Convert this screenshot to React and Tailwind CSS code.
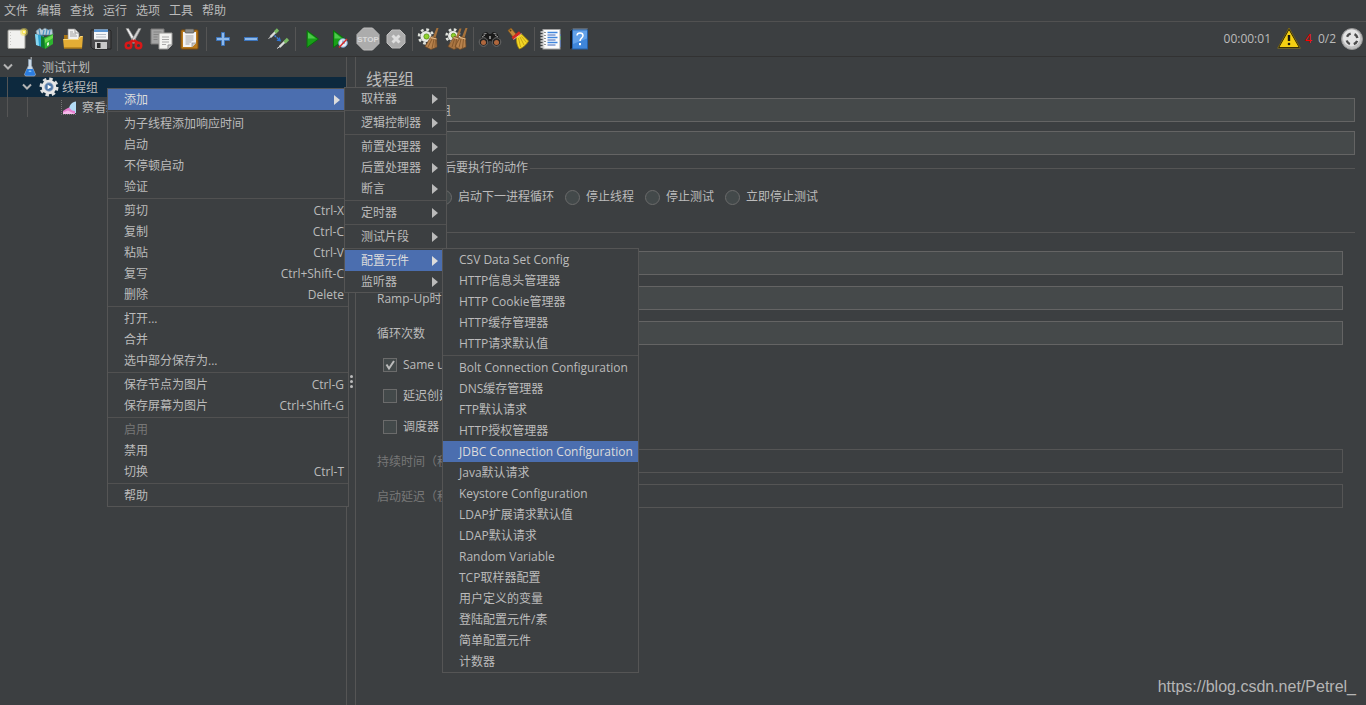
import { useState } from 'react'

const menuBar = ['文件', '编辑', '查找', '运行', '选项', '工具', '帮助']

// Each inner array is a block of items, blocks are split by a separator line
const configItems = [
    ['CSV Data Set Config', 'HTTP信息头管理器', 'HTTP Cookie管理器', 'HTTP缓存管理器', 'HTTP请求默认值'],
    [
        'Bolt Connection Configuration', 'DNS缓存管理器', 'FTP默认请求', 'HTTP授权管理器',
        'JDBC Connection Configuration', 'Java默认请求', 'Keystore Configuration', 'LDAP扩展请求默认值',
        'LDAP默认请求', 'Random Variable', 'TCP取样器配置', '用户定义的变量', '登陆配置元件/素',
        '简单配置元件', '计数器',
    ],
]

const addItems = [
    ['取样器'],
    ['逻辑控制器'],
    ['前置处理器', '后置处理器', '断言'],
    ['定时器'],
    ['测试片段'],
    ['配置元件', '监听器'],
]

const contextItems = [
    [{ label: '添加', arrow: true }],
    [{ label: '为子线程添加响应时间' }, { label: '启动' }, { label: '不停顿启动' }, { label: '验证' }],
    [
        { label: '剪切', keys: 'Ctrl-X' },
        { label: '复制', keys: 'Ctrl-C' },
        { label: '粘贴', keys: 'Ctrl-V' },
        { label: '复写', keys: 'Ctrl+Shift-C' },
        { label: '删除', keys: 'Delete' },
    ],
    [{ label: '打开...' }, { label: '合并' }, { label: '选中部分保存为...' }],
    [{ label: '保存节点为图片', keys: 'Ctrl-G' }, { label: '保存屏幕为图片', keys: 'Ctrl+Shift-G' }],
    [{ label: '启用', disabled: true }, { label: '禁用' }, { label: '切换', keys: 'Ctrl-T' }],
    [{ label: '帮助' }],
]

const Svg = ({ children, className = 'w-6 h-6' }) => (
    <svg className={className} viewBox="0 0 24 24" fill="none" aria-hidden="true">{children}</svg>
)

/* ---------- Toolbar icons ---------- */

const NewIcon = () => (
    <Svg>
        <rect x="3" y="3" width="17" height="18.5" rx="1" fill="#f1f1ef" stroke="#9d9d98" />
        <path d="M5.5 5v14.5" stroke="#c9c9c6" strokeDasharray="1 2" />
        <circle cx="19" cy="5" r="4" fill="#f2dd55" opacity=".45" />
        <circle cx="19" cy="5" r="2.4" fill="#f6e45c" />
        <circle cx="19" cy="5" r="1" fill="#fffde0" />
    </Svg>
)

const TemplatesIcon = () => (
    <Svg>
        <path d="M3 4l4-3 2 2 3-2 3 2 4-1 1 6H4z" fill="#b9cdd9" stroke="#71848f" strokeWidth=".7" />
        <path d="M6 2l1 6M11 3l-1 5M14 2l-1 6M17 3l-1 5" stroke="#4d93c2" strokeWidth="1.2" />
        <path d="M2 7l9 2v12l-7-3z" fill="#2ba0cf" />
        <path d="M2 7l3 1 1 11-3-1z" fill="#86d6f1" />
        <path d="M8 9l4 1v12l-4-2z" fill="#0f7a2b" />
        <path d="M11 11l9-4v10l-8 5z" fill="#2db32f" />
        <path d="M12 12l8-4v3l-8 5z" fill="#6bdc4f" />
        <path d="M14 16l2-1v3l-2 1z" fill="#d9f6cd" />
    </Svg>
)

const OpenIcon = () => (
    <Svg>
        <path d="M3 8h5l1 2h11v11H3z" fill="#a87414" />
        <path d="M7 2h7l4 4v9H7z" fill="#f2f2f2" stroke="#8e8e8e" strokeWidth=".7" />
        <path d="M14 2v4h4" stroke="#8e8e8e" strokeWidth=".8" />
        <path d="M9 5h3M9 7h6M9 9h7" stroke="#a2a2a2" />
        <path d="M2 12h15l2-3h3l-1 12.500H3z" fill="#e3ad35" />
        <path d="M2.500 12.500h15l2-3h2" stroke="#f8d983" />
        <path d="M3 21h18" stroke="#96650d" />
    </Svg>
)

const SaveIcon = () => (
    <Svg>
        <path d="M2 3h19l1 1v18H4l-2-2z" fill="#4a4a4c" stroke="#242424" />
        <rect x="5" y="2.500" width="14" height="10" fill="#f5f7f9" />
        <rect x="5" y="2.500" width="14" height="2.500" fill="#5c96d2" />
        <path d="M7 7.500h10M7 10h10" stroke="#b4bcc5" />
        <rect x="6" y="15" width="12" height="7" fill="#c9c9c9" />
        <rect x="8" y="16" width="3.500" height="5" fill="#2b2b2b" />
    </Svg>
)

const CutIcon = () => (
    <Svg>
        <path d="M4 1.500h2.500L14 14l-2 2.500z" fill="#f0f0f0" stroke="#8c8c8c" strokeWidth=".7" />
        <path d="M19 1.500h-2.500L9 14l2 2.500z" fill="#cfcfcf" stroke="#8c8c8c" strokeWidth=".7" />
        <path d="M11.500 13.500l-4 2M11.500 13.500l4 2" stroke="#d41616" strokeWidth="2.800" />
        <ellipse cx="6.500" cy="18.500" rx="2.800" ry="2.800" stroke="#d81818" strokeWidth="2.400" />
        <ellipse cx="16.500" cy="18.500" rx="2.800" ry="2.800" stroke="#d81818" strokeWidth="2.400" />
    </Svg>
)

const CopyIcon = () => (
    <Svg>
        <path d="M1 2h13v15H1z" fill="#a4a4a4" stroke="#787878" />
        <path d="M3.500 5h8M3.500 7.500h6M3.500 10h4M3.500 12.500h4" stroke="#858585" />
        <path d="M9 6h13v12l-4 4H9z" fill="#f3f3f1" stroke="#9a9a98" />
        <path d="M12 10h7M12 12.500h7M12 15h7M12 17.500h4" stroke="#a9a9a9" />
        <path d="M22 18h-4v4" fill="#d2d2d2" stroke="#8e8e8e" />
    </Svg>
)

const PasteIcon = () => (
    <Svg>
        <rect x="3" y="3" width="17" height="19" rx="1" fill="#b97a1c" stroke="#7e4d0b" />
        <path d="M5 5h13v11l-4 4H5z" fill="#f4f4f4" />
        <rect x="7" y="2" width="9" height="4" rx="1" fill="#8b8b87" stroke="#50504d" strokeWidth=".7" />
        <path d="M7.500 9h8M7.500 11h8M7.500 13h8M7.500 15h6M7.500 17h4" stroke="#a5a5a5" />
        <path d="M18 16h-4v4" fill="#c9c9c9" stroke="#8b8b8b" strokeWidth=".7" />
    </Svg>
)

const PlusIcon = () => (
    <Svg>
        <path d="M10.500 5.500h3v5h5v3h-5v5h-3v-5h-5v-3h5z" fill="#8cb8ea" stroke="#3c74bb" />
    </Svg>
)

const MinusIcon = () => (
    <Svg>
        <rect x="5.500" y="10.500" width="13" height="3" fill="#8cb8ea" stroke="#3c74bb" />
    </Svg>
)

const ToggleIcon = () => (
    <Svg>
        <path d="M1.500 11.500l3-2" stroke="#d6d6d6" />
        <path d="M3.500 10L9 4.500" stroke="#d9dcd7" strokeWidth="2.400" />
        <path d="M8 5.500l3-3" stroke="#78b862" strokeWidth="3.200" />
        <path d="M10 21.500l3-2" stroke="#d6d6d6" />
        <path d="M12.500 20l5.500-5.500" stroke="#d9dcd7" strokeWidth="2.400" />
        <path d="M17.500 15.500l3.500-3.500" stroke="#78b862" strokeWidth="3.200" />
        <path d="M7.500 8.500l4 3.500" stroke="#3c82dc" strokeWidth="1.500" strokeDasharray="2 1" />
        <path d="M14 14.500l-4.500-.800 3.300-3.700z" fill="#2f76d8" />
    </Svg>
)

const StartIcon = () => (
    <Svg>
        <path d="M7 3.500L18.500 12 7 20.500z" fill="#18a018" stroke="#0a6e0c" />
        <path d="M8 5.500L16 11.500H8z" fill="#4cc94a" />
    </Svg>
)

const StartNoPauseIcon = () => (
    <Svg>
        <path d="M5.500 3.500L17 12 5.500 20.500z" fill="#18a018" stroke="#0a6e0c" />
        <path d="M6.500 5.500L14 11.500H6.500z" fill="#4cc94a" />
        <circle cx="15" cy="16" r="4.300" fill="#e3ecf5" stroke="#769fc8" />
        <path d="M15 13.500V16h2" stroke="#467eb3" />
        <path d="M11 20.500l8-8.500" stroke="#d42a2a" strokeWidth="1.500" />
    </Svg>
)

const StopIcon = () => (
    <Svg>
        <path d="M7.500 1h9L23 7.500v9L16.500 23h-9L1 16.500v-9z" fill="#acacac" stroke="#bebebe" />
        <text x="12" y="15" textAnchor="middle" fontSize="8" fontWeight="700" fontFamily="Liberation Sans, sans-serif" fill="#dadada">STOP</text>
    </Svg>
)

const ShutdownIcon = () => (
    <Svg>
        <path d="M8 3h8l5 5v8l-5 5H8l-5-5V8z" fill="#acacac" stroke="#bdbdbd" />
        <path d="M8.500 8.500l7 7M15.500 8.500l-7 7" stroke="#dedede" strokeWidth="3" />
    </Svg>
)

const ClearIcon = () => (
    <Svg>
        <circle cx="9" cy="9.500" r="5.500" fill="#e8eae5" />
        <circle cx="9" cy="9.500" r="7" stroke="#dfe2dc" strokeWidth="2.500" strokeDasharray="2.800 2.698" />
        <circle cx="9.500" cy="9.500" r="2.600" fill="#8fd32c" stroke="#558b16" strokeWidth=".8" />
        <path d="M19.500 1h2l-3 10-2.500-1z" fill="#a5713b" />
        <path d="M14 9.500l5.500 1.500.500 9-6 2.500-6-3z" fill="#b8824c" stroke="#6f4822" strokeWidth=".7" />
        <path d="M15 12l-4 8M17 12l-2 9.500M18.500 12l-.500 8" stroke="#7d5227" strokeWidth=".8" />
        <path d="M13.500 10.500l6 1.500" stroke="#e3bc8b" />
    </Svg>
)

const ClearAllIcon = () => (
    <Svg>
        <circle cx="8" cy="9" r="5" fill="#e8eae5" />
        <circle cx="8" cy="9" r="6.500" stroke="#dfe2dc" strokeWidth="2.500" strokeDasharray="2.600 2.505" />
        <circle cx="8.500" cy="8.500" r="2.200" fill="#8fd32c" stroke="#558b16" strokeWidth=".8" />
        <path d="M14.500 1.500h2l-3 9.500-2.500-1zM20.500 1h2l-3 10-2.500-1z" fill="#a5713b" />
        <path d="M9 9.500l5 1.500v9l-5 2.500-6-3z" fill="#a97542" stroke="#6f4822" strokeWidth=".7" />
        <path d="M15.500 9.500l5 1.500.500 9-6 2.500-5-3z" fill="#b8824c" stroke="#6f4822" strokeWidth=".7" />
        <path d="M9.500 12L7 20M11.500 12l-1 9M16 12l-2 8.500M18.500 12l-1 9" stroke="#7d5227" strokeWidth=".8" />
        <path d="M8.500 10.500l5 1.500M15 10.500l5.500 1.500" stroke="#e3bc8b" />
    </Svg>
)

const BinocularsIcon = () => (
    <Svg>
        <path d="M5 6l4-1 2 2h2l2-2 4 1 4 9-3 3h-5l-2-4h-2l-2 4H4l-3-3z" fill="#191919" />
        <path d="M5.500 7l3-.5M18.500 7l-3-.5M4 10l3-2M20 10l-3-2" stroke="#a0a0a0" />
        <circle cx="5.500" cy="15" r="4.300" fill="#242424" stroke="#6c6c6c" />
        <circle cx="18.500" cy="15" r="4.300" fill="#242424" stroke="#6c6c6c" />
        <circle cx="5.500" cy="15.500" r="2.500" fill="#b0673d" />
        <circle cx="18.500" cy="15.500" r="2.500" fill="#b0673d" />
        <path d="M11 9h2v3h-2z" fill="#858585" />
    </Svg>
)

const BroomIcon = () => (
    <Svg>
        <path d="M2 3.500L5 1l5 6-3 3z" fill="#c58a3c" stroke="#7d5218" strokeWidth=".7" />
        <circle cx="4.500" cy="3.500" r="1" fill="#5e3b0f" />
        <path d="M10.500 9.500l5-2.500 7 7c-1.500 3-5 6.500-9 8-2-2-3.500-7-3-12.500z" fill="#f3d625" stroke="#a88a0a" strokeWidth=".8" />
        <path d="M12.500 11l2 9M14 10l4 8M15.500 9.500l5 6" stroke="#b8980f" strokeWidth=".8" />
        <path d="M6.500 11.500l7.500-6" stroke="#d42a20" strokeWidth="3" />
        <path d="M7.500 12.500l8-6" stroke="#f6cac4" strokeWidth=".7" />
    </Svg>
)

const ListIcon = () => (
    <Svg>
        <path d="M20 7h2v13h-2z" fill="#1c4fb0" />
        <path d="M20 9h2v4h-2z" fill="#26a238" />
        <rect x="4" y="2.500" width="17" height="19.500" fill="#fbfbfb" stroke="#a3a3a3" />
        <path d="M8.500 5.500h10M8.500 10.500h10M8.500 15.500h10" stroke="#3f86dd" strokeWidth="1.300" />
        <path d="M8.500 8h8M8.500 13h8M8.500 18h8" stroke="#3a62b8" strokeWidth="1" />
        <path d="M1.500 5h4M1.500 8h4M1.500 11h4M1.500 14h4M1.500 17h4M1.500 20h4" stroke="#d7d7d7" strokeWidth="1.400" />
        <path d="M5.500 5.500h1M5.500 8.500h1M5.500 11.500h1M5.500 14.500h1M5.500 17.500h1" stroke="#333" />
    </Svg>
)

const HelpIcon = () => (
    <Svg>
        <path d="M3 4l3-2.500h15L18.500 4z" fill="#7e8a97" />
        <path d="M3 4l3-2v18.500L3 22z" fill="#15181e" />
        <rect x="5.500" y="3" width="15" height="19" fill="#3f86da" stroke="#2560a8" />
        <path d="M6 3.500h14v8L6 17z" fill="#62a1ea" />
        <path d="M10 8.500c0-3.500 6-3.500 6 0 0 2.500-3 2.500-3 5.500" stroke="#fff" strokeWidth="1.500" />
        <rect x="12" y="16" width="2" height="2.200" fill="#fff" />
    </Svg>
)

const toolGroups = [
    [['新建', NewIcon], ['模板', TemplatesIcon], ['打开', OpenIcon], ['保存', SaveIcon]],
    [['剪切', CutIcon], ['复制', CopyIcon], ['粘贴', PasteIcon]],
    [['展开', PlusIcon], ['折叠', MinusIcon], ['切换', ToggleIcon]],
    [['启动', StartIcon], ['不停顿启动', StartNoPauseIcon], ['停止', StopIcon], ['关闭', ShutdownIcon]],
    [['清除', ClearIcon], ['清除全部', ClearAllIcon]],
    [['查找', BinocularsIcon], ['重置查找', BroomIcon]],
    [['函数助手', ListIcon], ['帮助', HelpIcon]],
]

const WarningIcon = () => (
    <Svg>
        <path d="M12 2L22.500 20.500h-21z" fill="#f4cf12" stroke="#1f1b05" strokeWidth="1.200" strokeLinejoin="round" />
        <path d="M12 1L23.300 21.200H.7z" stroke="#a88c14" strokeWidth=".6" strokeLinejoin="round" />
        <path d="M12 8v6" stroke="#1c1a10" strokeWidth="2.400" />
        <circle cx="12" cy="17" r="1.300" fill="#1c1a10" />
    </Svg>
)

const StatusIcon = () => (
    <Svg>
        <circle cx="12" cy="12" r="10.500" fill="#c0c0c0" stroke="#969696" />
        <circle cx="11.500" cy="11" r="8.500" fill="#e4e4e4" />
        <circle cx="12" cy="12" r="5.500" stroke="#4b4b4b" strokeWidth="2.400" strokeDasharray="4.600 4.039" strokeDashoffset="-2" />
    </Svg>
)

/* ---------- Tree icons ---------- */

const Chevron = () => (
    <svg className="w-4 h-4" viewBox="0 0 16 16" fill="none" aria-hidden="true">
        <path d="M4 5.500l4 4 4-4" stroke="#b4b4b4" strokeWidth="2" />
    </svg>
)

const FlaskIcon = () => (
    <svg className="w-5 h-5" viewBox="0 0 20 20" fill="none" aria-hidden="true">
        <path d="M8.500 2.500h3v6L15.500 17.500l-1 1.500h-9l-1-1.500L8.500 8.500z" fill="#cddae6" stroke="#8fa2b3" strokeWidth=".8" />
        <path d="M7 12h6l2.300 5.300-1 1.500H5.700l-1-1.500z" fill="#2c7de0" />
        <path d="M9 13.500h2l.500 1.500h-3z" fill="#7fc1fa" />
        <path d="M10.500 1l1.500 0" stroke="#e9eef2" />
    </svg>
)

const GearIcon = () => (
    <svg className="w-5 h-5" viewBox="0 0 20 20" fill="none" aria-hidden="true">
        <circle cx="10" cy="10" r="8" stroke="#dedede" strokeWidth="3" strokeDasharray="3.400 2.883" />
        <circle cx="10" cy="10" r="6" fill="#95aac6" stroke="#e8e8e8" strokeWidth="2.600" />
        <circle cx="10" cy="10" r="3.800" fill="#5078a8" />
        <path d="M8.700 7.700L12.500 10l-3.800 2.300z" fill="#fff" />
    </svg>
)

const ChartIcon = () => (
    <svg className="w-5 h-5" viewBox="0 0 20 20" fill="none" aria-hidden="true">
        <path d="M2.500 3v14.500H18" stroke="#8a8a8a" strokeWidth=".7" strokeDasharray="1 1" />
        <path d="M10 11c1.500-4 3-6 7-6.500V16h-7z" fill="#b4dcf6" />
        <path d="M4 17v-3l3-2 3-1.500 3 3 3 .500v3z" fill="#e77fd0" />
        <path d="M4 17v-1.500l5-2 7 3.500z" fill="#f5b9ea" />
    </svg>
)

/* ---------- Menus ---------- */

const MenuItem = ({ label, keys, arrow, active, disabled }) => (
    <button
        type="button"
        disabled={disabled}
        className={`flex h-[21px] w-full items-center justify-between whitespace-nowrap pl-4 pr-1 text-left ${active
            ? 'bg-[#4b6eaf] text-[#dcdcdc]'
            : 'text-[#bbbbbb] enabled:hover:bg-[#4b6eaf] disabled:text-[#777777]'
            }`}
    >
        <span>{label}</span>
        {keys && <span>{keys}</span>}
        {arrow && (
            <svg className="h-2.5 w-1.5" viewBox="0 0 6 10" aria-hidden="true">
                <path d="M0 0l6 5-6 5z" fill="currentColor" />
            </svg>
        )}
    </button>
)

const MenuBlock = ({ first, children }) => (
    <div>
        {!first && <div className="my-px h-px bg-[#515151]" />}
        {children}
    </div>
)

const menuBox = 'absolute border border-[#555555] bg-[#3c3f41]'

const ContextMenu = () => (
    <div className={`${menuBox} left-[107px] top-[88px] w-[242px]`}>
        {contextItems.map((block, i) => (
            <MenuBlock key={i} first={i === 0}>
                {block.map((item) => (
                    <div key={item.label} className={item.arrow ? 'bg-[#4b6eaf] pr-1' : ''}>
                        <MenuItem {...item} active={item.label === '添加'} />
                    </div>
                ))}
            </MenuBlock>
        ))}
    </div>
)

const AddMenu = () => (
    <div className={`${menuBox} left-[344px] top-[87px] w-[103px]`}>
        {addItems.map((block, i) => (
            <MenuBlock key={i} first={i === 0}>
                {block.map((label) => (
                    <div key={label} className="pr-1">
                        <MenuItem label={label} arrow active={label === '配置元件'} />
                    </div>
                ))}
            </MenuBlock>
        ))}
    </div>
)

const ConfigMenu = () => (
    <div className={`${menuBox} left-[442px] top-[248px] w-[197px]`}>
        {configItems.map((block, i) => (
            <MenuBlock key={i} first={i === 0}>
                {block.map((label) => (
                    <MenuItem key={label} label={label} active={label === 'JDBC Connection Configuration'} />
                ))}
            </MenuBlock>
        ))}
    </div>
)

/* ---------- Form parts ---------- */

const fieldStyle = 'h-6 min-w-0 flex-1 border border-[#646464] bg-[#45494a] px-1.5 outline-none disabled:border-[#555555] disabled:bg-[#3c3f41]'

const PropertyRow = ({ id, label, value, disabled }) => (
    <div className="flex items-center">
        <label htmlFor={id} className={`w-32 shrink-0 whitespace-nowrap pt-0.5 ${disabled ? 'text-[#777777]' : ''}`}>{label}</label>
        <input id={id} type="text" defaultValue={value} disabled={disabled} className={fieldStyle} />
    </div>
)

const CheckRow = ({ label, checked }) => (
    <label className="flex h-[18px] items-center gap-1.5">
        <span className="relative flex">
            <input
                type="checkbox"
                defaultChecked={checked}
                className="peer h-3.5 w-3.5 appearance-none border border-[#6b6b6b] bg-[#43494a]"
            />
            <svg className="pointer-events-none absolute inset-0 hidden h-3.5 w-3.5 peer-checked:block" viewBox="0 0 14 14" fill="none" aria-hidden="true">
                <path d="M3.500 6.500l2.500 4 5-7.500" stroke="#bbbbbb" strokeWidth="2" />
            </svg>
        </span>
        {label}
    </label>
)

const ThreadGroupPanel = () => {
    const [action, setAction] = useState('继续')

    return (
        <main className="min-w-0 flex-1 border-l border-[#555555] pl-2.5 pr-[11px] pt-2.5">
            <h1 className="mb-[7px] text-base leading-6">线程组</h1>

            <div className="flex flex-col gap-[9px]">
                <div className="flex items-center gap-1.5">
                    <label htmlFor="name">名称：</label>
                    <input id="name" type="text" defaultValue="线程组" className={fieldStyle} />
                </div>
                <div className="flex items-center gap-1.5">
                    <label htmlFor="comment">注释：</label>
                    <input id="comment" type="text" className={fieldStyle} />
                </div>
            </div>

            <fieldset className="mt-1 border-t border-[#555555]">
                <legend className="ml-1 px-0.5">在取样器错误后要执行的动作</legend>
                <div className="flex gap-[11px] pl-[15px] pt-[11px]">
                    {['继续', '启动下一进程循环', '停止线程', '停止测试', '立即停止测试'].map((name) => (
                        <label key={name} className="flex items-center gap-1.5 whitespace-nowrap">
                            <input
                                type="radio"
                                name="action"
                                checked={action === name}
                                onChange={() => setAction(name)}
                                className="h-[15px] w-[15px] appearance-none rounded-full border border-[#6b6b6b] bg-[#43494a] checked:bg-[#bbbbbb]"
                            />
                            {name}
                        </label>
                    ))}
                </div>
            </fieldset>

            <fieldset className="mt-[17px] border-t border-[#555555] pl-[11px] pr-3">
                <legend className="px-0.5">线程属性</legend>
                <div className="flex flex-col gap-[11px] pt-2.5">
                    <PropertyRow id="threads" label="线程数：" value="2" />
                    <PropertyRow id="rampup" label="Ramp-Up时间（秒）：" value="1" />
                    <PropertyRow id="loops" label="循环次数" value="1" />
                </div>
                <div className="flex flex-col gap-[13px] py-[13px] pl-1.5 pt-[11px]">
                    <CheckRow label="Same user on each iteration" checked />
                    <CheckRow label="延迟创建线程直到需要" />
                    <CheckRow label="调度器" />
                </div>
                <div className="flex flex-col gap-[11px]">
                    <PropertyRow id="duration" label="持续时间（秒）" disabled />
                    <PropertyRow id="delay" label="启动延迟（秒）" disabled />
                </div>
            </fieldset>
        </main>
    )
}

const TestTree = () => (
    <nav className="w-[347px] shrink-0 overflow-hidden border-r border-[#555555]">
        <div className="flex h-5 items-center">
            <Chevron />
            <span className="ml-1 flex w-[22px]"><FlaskIcon /></span>
            <span className="pt-0.5">测试计划</span>
        </div>
        <div className="flex h-5 items-center bg-[#0d293e] pl-[7px]">
            <span className="h-5 w-3 border-l border-[#555555]" />
            <Chevron />
            <span className="ml-1 flex w-[23px]"><GearIcon /></span>
            <span className="pt-0.5">线程组</span>
        </div>
        <div className="flex h-5 items-center pl-[7px]">
            <span className="h-5 w-5 border-l border-[#555555]" />
            <span className="h-5 w-8 border-l border-[#555555]" />
            <span className="flex w-[23px]"><ChartIcon /></span>
            <span className="pt-0.5">察看结果树</span>
        </div>
    </nav>
)

const App = () => {
    return (
        <div className="relative flex min-h-screen flex-col overflow-hidden bg-[#3c3f41] font-['Open_Sans','Noto_Sans_CJK_SC',sans-serif] text-xs leading-[18px] text-[#bbbbbb]">
            {/* Menu bar */}
            <div className="flex h-[22px] items-center gap-[9px] border-b border-[#515151] pl-1">
                {menuBar.map((name) => (
                    <button key={name} type="button">{name}</button>
                ))}
            </div>

            {/* Toolbar */}
            <div className="flex h-[35px] items-center border-b border-[#323232] pl-[3px] pr-0.5">
                {toolGroups.map((group, i) => (
                    <div key={i} className="flex items-center">
                        {i > 0 && <span className="mx-0.5 h-6 w-px bg-[#555555]" />}
                        {group.map(([title, Icon]) => (
                            <button key={title} type="button" aria-label={title} className="flex w-7 justify-center">
                                <Icon />
                            </button>
                        ))}
                    </div>
                ))}
                <div className="ml-auto flex items-center gap-1.5">
                    <span>00:00:01</span>
                    <span className="flex items-center gap-1">
                        <WarningIcon />
                        <span className="text-[#ff0000]">4</span>
                    </span>
                    <span className="flex items-center gap-1">
                        0/2
                        <StatusIcon />
                    </span>
                </div>
            </div>

            <div className="flex flex-1">
                <TestTree />
                {/* Splitter */}
                <div className="flex w-2 shrink-0 flex-col items-center justify-center gap-0.5">
                    <i className="h-[3px] w-[3px] rounded-full bg-[#bbbbbb]" />
                    <i className="h-[3px] w-[3px] rounded-full bg-[#bbbbbb]" />
                    <i className="h-[3px] w-[3px] rounded-full bg-[#bbbbbb]" />
                </div>
                <ThreadGroupPanel />
            </div>

            <ContextMenu />
            <AddMenu />
            <ConfigMenu />

            <a
                href="https://blog.csdn.net/Petrel_"
                className="absolute bottom-2 right-2.5 font-['Liberation_Sans',sans-serif] text-base leading-5 text-[#b5b5b5]"
            >
                https://blog.csdn.net/Petrel_
            </a>
        </div>
    )
}

export default App
